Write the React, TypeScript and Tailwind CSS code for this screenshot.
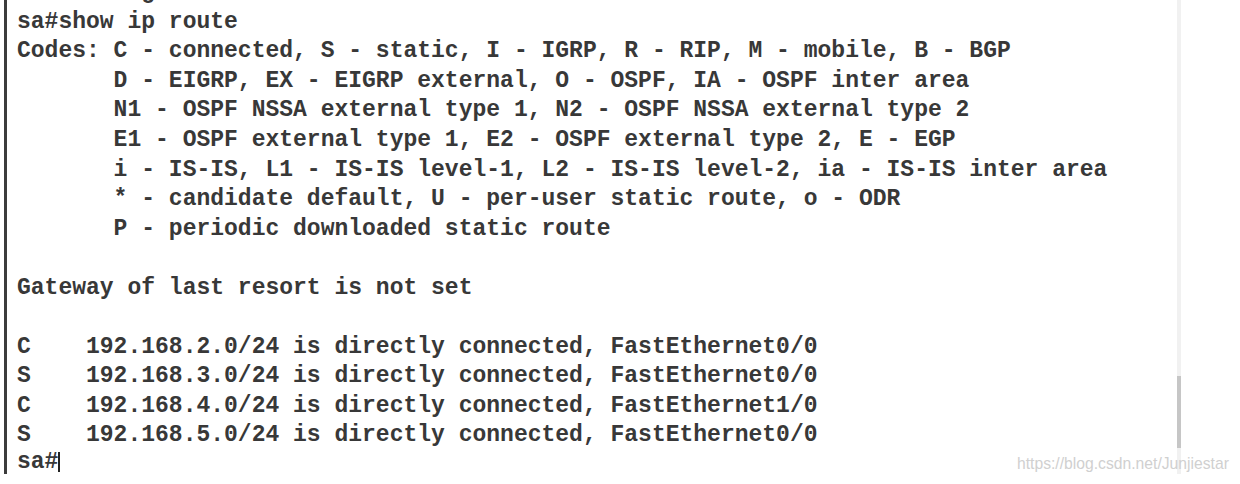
import React from "react";

const lines: string[] = [
  "Rebuilding",
  "sa#show ip route",
  "Codes: C - connected, S - static, I - IGRP, R - RIP, M - mobile, B - BGP",
  "       D - EIGRP, EX - EIGRP external, O - OSPF, IA - OSPF inter area",
  "       N1 - OSPF NSSA external type 1, N2 - OSPF NSSA external type 2",
  "       E1 - OSPF external type 1, E2 - OSPF external type 2, E - EGP",
  "       i - IS-IS, L1 - IS-IS level-1, L2 - IS-IS level-2, ia - IS-IS inter area",
  "       * - candidate default, U - per-user static route, o - ODR",
  "       P - periodic downloaded static route",
  "",
  "Gateway of last resort is not set",
  "",
  "C    192.168.2.0/24 is directly connected, FastEthernet0/0",
  "S    192.168.3.0/24 is directly connected, FastEthernet0/0",
  "C    192.168.4.0/24 is directly connected, FastEthernet1/0",
  "S    192.168.5.0/24 is directly connected, FastEthernet0/0",
];

export default function App() {
  return (
    <div className="relative w-[1240px] h-[484px] bg-white overflow-hidden">
      <div className="flex h-[474px] pl-[4px] w-[1181px]">
        <div className="flex-1 border-l-[3px] border-[#3c3c3c] overflow-hidden pl-[10px]">
          <div
            className="mt-[-21.6px] text-[23px] leading-[29.53px] font-bold text-[#383838] whitespace-pre"
            style={{ fontFamily: '"Liberation Mono", "Courier New", monospace' }}
          >
            {lines.map((l, i) => (
              <div key={i} className="h-[29.53px]">
                {l === "" ? "\u00a0" : l}
              </div>
            ))}
            <div className="h-[23px] leading-[23px] flex items-start">
              <span>sa#</span>
              <span className="inline-block w-[2px] h-[20px] bg-[#222] mt-[1px]" />
            </div>
          </div>
        </div>
        <div className="w-[4px] h-full bg-[#f1f1f1] flex flex-col">
          <div className="h-[376px]" />
          <div className="h-[72px] bg-[#c6c6c6]" />
        </div>
      </div>
      <div
        className="absolute left-[1017px] top-[456px] text-[15.7px] leading-none text-[#d0d0d0] whitespace-nowrap"
        style={{ fontFamily: '"Liberation Sans", Arial, sans-serif' }}
      >
        https://blog.csdn.net/Junjiestar
      </div>
    </div>
  );
}
